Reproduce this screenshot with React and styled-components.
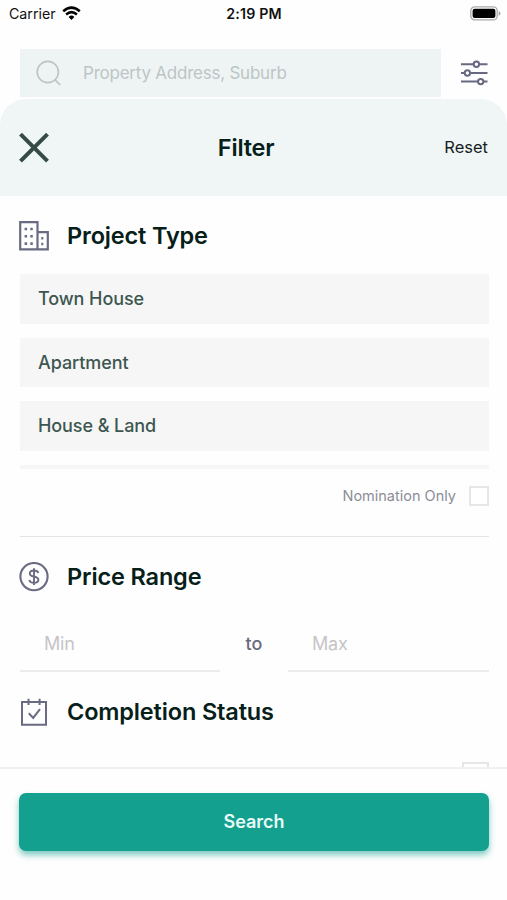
import { useState } from 'react';
import styled, { createGlobalStyle } from 'styled-components';

const GlobalStyle = createGlobalStyle`
  * {
    box-sizing: border-box;
  }
  body {
    margin: 0;
    background: #fff;
    font-family: Inter, 'Liberation Sans', sans-serif;
  }
  button,
  input {
    border: none;
    background: none;
    padding: 0;
    margin: 0;
    font-family: inherit;
    outline: none;
  }
  svg {
    display: block;
    flex-shrink: 0;
  }
`;

const Screen = styled.div`
  height: 900px;
  display: flex;
  flex-direction: column;
  overflow: hidden;
  background: #fefefe;
`;

const StatusBar = styled.div`
  height: 27px;
  padding: 0 6px 0 9px;
  display: grid;
  grid-template-columns: 1fr auto 1fr;
  align-items: center;
  font-size: 14.2px;
  color: #111;
  .carrier {
    display: flex;
    align-items: center;
    gap: 6px;
  }
  .time {
    font-weight: 600;
    letter-spacing: 0.2px;
    margin-right: 2px;
  }
  .battery {
    justify-self: end;
  }
`;

const TopBar = styled.div`
  margin-top: 22px;
  padding: 0 18px 0 20px;
  display: flex;
  align-items: center;
  justify-content: space-between;
`;

const SearchBox = styled.div`
  width: 421px;
  height: 48px;
  padding-left: 16px;
  display: flex;
  align-items: center;
  gap: 21px;
  background: #eef4f4;
  input {
    flex: 1;
    font-size: 17px;
    letter-spacing: -0.23px;
    color: #3b5049;
  }
  input::placeholder {
    color: #bcc5c5;
  }
`;

const Sheet = styled.div`
  flex: 1;
  min-height: 0;
  margin-top: 2px;
  display: flex;
  flex-direction: column;
  border-radius: 26px 26px 0 0;
  overflow: hidden;
`;

const SheetHeader = styled.div`
  height: 97px;
  padding: 0 19px;
  display: flex;
  justify-content: space-between;
  align-items: center;
  background: #f0f6f6;
  h1 {
    margin: 0 1px 0 0;
    font-size: 23.5px;
    font-weight: 600;
    letter-spacing: -0.2px;
    color: #062019;
  }
`;

const ResetButton = styled.button`
  padding-bottom: 1px;
  font-size: 16.5px;
  color: #16211e;
`;

const Content = styled.div`
  height: 571px;
  padding: 0 18px 0 20px;
  overflow: hidden;
`;

const SectionTitle = styled.div`
  height: ${({ $height }) => $height}px;
  padding-top: ${({ $top }) => $top || 0}px;
  display: flex;
  align-items: center;
  gap: 18px;
  margin-left: -1px;
  h2 {
    margin: 0;
    font-size: 23.5px;
    line-height: 30px;
    font-weight: 600;
    letter-spacing: -0.15px;
    color: #062019;
  }
`;

const TypeList = styled.div`
  height: 195px;
  display: flex;
  flex-direction: column;
  gap: 14px;
  overflow: hidden;
`;

const TypeItem = styled.div`
  height: 49.5px;
  flex-shrink: 0;
  padding-left: 18px;
  display: flex;
  align-items: center;
  font-size: 18px;
  font-weight: 500;
  letter-spacing: -0.08px;
  color: #3d5650;
  background: #f6f6f6;
`;

const CheckRow = styled.label`
  height: ${({ $height }) => $height}px;
  display: flex;
  align-items: center;
  justify-content: flex-end;
  gap: 13px;
  font-size: 14.5px;
  color: #8c8d98;
`;

const CheckBox = styled.span`
  width: ${({ $size }) => $size}px;
  height: ${({ $size }) => $size}px;
  border: 2px solid #e6e6e6;
  background: #fff;
`;

const Divider = styled.div`
  height: 1px;
  margin-top: 14px;
  background: #e4e4e4;
`;

const PriceRow = styled.div`
  height: 54px;
  margin-top: 1px;
  display: grid;
  grid-template-columns: 200px 1fr 201px;
  align-items: center;
  text-align: center;
  font-size: 18px;
  font-weight: 500;
  color: #6a6a7e;
  span {
    padding-bottom: 3px;
  }
`;

const PriceInput = styled.input`
  height: 54px;
  min-width: 0;
  padding: 0 0 2px 24px;
  font-size: 18px;
  letter-spacing: -0.15px;
  border-bottom: 2px solid #ececec;
  &::placeholder {
    color: #c5c5c7;
  }
`;

const Footer = styled.div`
  flex: 1;
  padding: 24px 18px 0 19px;
  border-top: 2px solid #f1f1f1;
`;

const SearchButton = styled.button`
  width: 100%;
  height: 58px;
  padding-bottom: 1px;
  border-radius: 7px;
  font-size: 18px;
  font-weight: 600;
  color: #e9fbf7;
  background: #14a08f;
  box-shadow: 0 4px 6px rgba(20, 160, 143, 0.55);
`;

function WifiIcon() {
  return (
    <svg width="19" height="15" viewBox="0 0 19 15" fill="none" stroke="#000" strokeWidth="2.5">
      <path d="M1.2 5.2Q9.5-2 17.8 5.2" />
      <path d="M4.1 8.5Q9.5 3.8 14.9 8.5" />
      <path d="M6.6 10.9Q9.5 8.2 12.4 10.9L9.5 14z" fill="#000" stroke="none" />
    </svg>
  );
}

function BatteryIcon() {
  return (
    <svg className="battery" width="31" height="16" viewBox="0 0 31 16">
      <rect x="0.8" y="0.9" width="26.4" height="13" rx="4" fill="#fff" stroke="#a9a9a9" strokeWidth="1.3" />
      <rect x="2.6" y="2.7" width="22.8" height="9.4" rx="2" fill="#000" />
      <path d="M28.7 5.1q1.8.7 1.8 2.3t-1.8 2.3z" fill="#a9a9a9" />
    </svg>
  );
}

function SearchIcon() {
  return (
    <svg width="26" height="26" viewBox="0 0 26 26" fill="none" stroke="#bcc5c5" strokeWidth="1.7">
      <circle cx="11.8" cy="12" r="10.6" />
      <path d="M18.8 19.6L24.2 25" />
    </svg>
  );
}

function FilterIcon() {
  return (
    <svg width="29" height="26" viewBox="0 0 29 26" fill="#fefefe" stroke="#686880" strokeWidth="2">
      <path d="M1 4.2h26.5M1 13h26.5M1 21.6h26.5" />
      <circle cx="16.4" cy="4.2" r="2.7" />
      <circle cx="7.4" cy="13" r="2.7" />
      <circle cx="20.7" cy="21.6" r="2.7" />
    </svg>
  );
}

function CloseIcon() {
  return (
    <svg width="30" height="30" viewBox="0 0 30 30" stroke="#354b46" strokeWidth="4">
      <path d="M1.5 1.2L28.5 28.2M28.5 1.2L1.5 28.2" />
    </svg>
  );
}

function BuildingIcon() {
  return (
    <svg width="30" height="30" viewBox="0 0 30 30" fill="none" stroke="#6a6a82" strokeWidth="2.2">
      <path d="M1.2 1.2h17.3v27.2H1.2zM18.5 11.2h10.3v17.2H18.5" />
      <path
        d="M5.6 8h2.5M11.3 8h2.5M5.6 15.2h2.5M11.3 15.2h2.5M5.6 22.6h2.5M11.3 22.6h2.5M22.3 17.2h2M22.3 23h2"
        strokeWidth="2.6"
      />
    </svg>
  );
}

function DollarIcon() {
  return (
    <svg width="30" height="30" viewBox="0 0 30 30" fill="none" stroke="#6a6a82" strokeWidth="2.1">
      <circle cx="15" cy="14.6" r="13.6" />
      <path
        d="M19.3 10.9C18.8 9.2 17.2 8.5 15 8.5c-2.5 0-4.2 1.1-4.2 2.9 0 1.9 1.6 2.6 4.2 3.1 2.7.6 4.4 1.3 4.4 3.3 0 1.9-1.8 3-4.4 3-2.5 0-4.3-1-4.6-3M15 6.3v16.6"
        strokeWidth="1.9"
      />
    </svg>
  );
}

function CalendarIcon() {
  return (
    <svg width="30" height="30" viewBox="0 0 30 30" fill="none" stroke="#6a6a82" strokeWidth="2">
      <path d="M3 5h24v22.7H3zM9.5 1.8v6.3M20.6 1.8v6.3" />
      <path d="M9.8 16.3l4.4 4.6 6.8-8.8" />
    </svg>
  );
}

const types = ['Town House', 'Apartment', 'House & Land', ''];

function App() {
  const [min, setMin] = useState('');
  const [max, setMax] = useState('');

  return (
    <>
      <GlobalStyle />
      <Screen>
        <StatusBar>
          <div className="carrier">
            Carrier
            <WifiIcon />
          </div>
          <div className="time">2:19 PM</div>
          <BatteryIcon />
        </StatusBar>
        <TopBar>
          <SearchBox>
            <SearchIcon />
            <input placeholder="Property Address, Suburb" />
          </SearchBox>
          <FilterIcon />
        </TopBar>
        <Sheet>
          <SheetHeader>
            <CloseIcon />
            <h1>Filter</h1>
            <ResetButton>Reset</ResetButton>
          </SheetHeader>
          <Content>
            <SectionTitle $height={78} $top={2}>
              <BuildingIcon />
              <h2>Project Type</h2>
            </SectionTitle>
            <TypeList>
              {types.map((type) => (
                <TypeItem key={type}>{type}</TypeItem>
              ))}
            </TypeList>
            <CheckRow $height={53}>
              Nomination Only
              <CheckBox $size={20} />
            </CheckRow>
            <Divider />
            <SectionTitle $height={80}>
              <DollarIcon />
              <h2>Price Range</h2>
            </SectionTitle>
            <PriceRow>
              <PriceInput placeholder="Min" value={min} onChange={(e) => setMin(e.target.value)} />
              <span>to</span>
              <PriceInput placeholder="Max" value={max} onChange={(e) => setMax(e.target.value)} />
            </PriceRow>
            <SectionTitle $height={80}>
              <CalendarIcon />
              <h2>Completion Status</h2>
            </SectionTitle>
            <CheckRow $height={47}>
              <CheckBox $size={27} />
            </CheckRow>
          </Content>
          <Footer>
            <SearchButton>Search</SearchButton>
          </Footer>
        </Sheet>
      </Screen>
    </>
  );
}

export default App;
